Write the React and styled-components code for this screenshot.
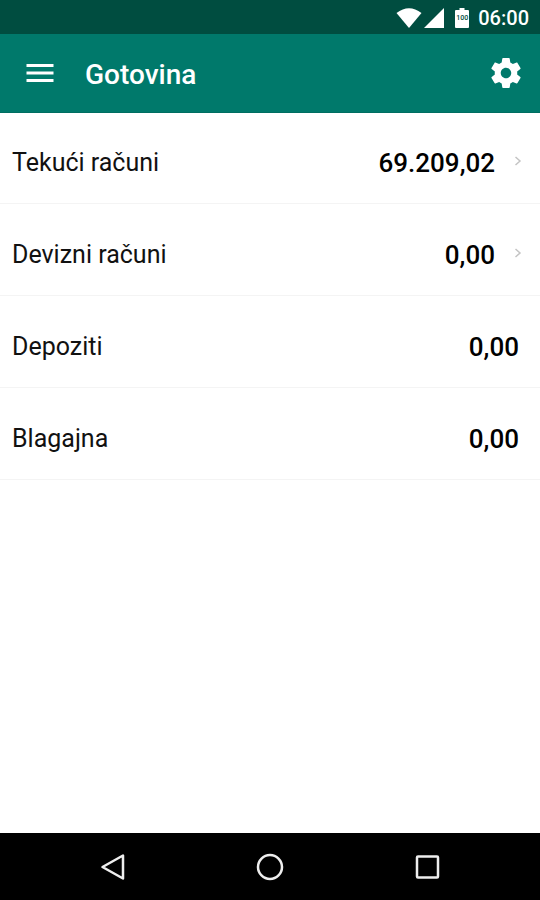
import React from "react";
import styled, { createGlobalStyle } from "styled-components";

const accounts = [
  { name: "Tekući računi", amount: "69.209,02", hasDetails: true },
  { name: "Devizni računi", amount: "0,00", hasDetails: true },
  { name: "Depoziti", amount: "0,00", hasDetails: false },
  { name: "Blagajna", amount: "0,00", hasDetails: false },
];

const AccountRow = ({ account }) => (
  <Row>
    <RowContent
      as={account.hasDetails ? "a" : "div"}
      href={account.hasDetails ? "#" : undefined}
    >
      <AccountName>{account.name}</AccountName>
      <Amount>{account.amount}</Amount>
      {account.hasDetails && (
        <Chevron viewBox="0 0 8 12" aria-hidden="true">
          <path d="M1.5 2L6 6L1.5 10" />
        </Chevron>
      )}
    </RowContent>
  </Row>
);

const App = () => {
  return (
    <Screen>
      <GlobalStyle />
      <StatusBar>
        <svg width="26" height="20" viewBox="0 0 26 20" aria-hidden="true">
          <path d="M0.5 5Q13-4.5 25.5 5L13 20Z" fill="#fff" />
        </svg>
        <svg width="20" height="20" viewBox="0 0 20 20" aria-hidden="true">
          <path d="M20 0V20H0Z" fill="#fff" />
        </svg>
        <Battery>
          <svg width="14" height="20" viewBox="0 0 14 20" aria-hidden="true">
            <path
              d="M4.5 0h5v2H13q1 0 1 1v16q0 1-1 1H1q-1 0-1-1V3q0-1 1-1h3.5z"
              fill="#fff"
            />
          </svg>
          <BatteryLevel>100</BatteryLevel>
        </Battery>
        <Clock>06:00</Clock>
      </StatusBar>

      <AppBar>
        <IconButton type="button" aria-label="Meni">
          <svg viewBox="0 0 24 24">
            <path d="M3 18h18v-2H3v2zm0-5h18v-2H3v2zm0-7v2h18V6H3z" />
          </svg>
        </IconButton>
        <Title>Gotovina</Title>
        <IconButton type="button" aria-label="Postavke">
          <svg viewBox="0 0 24 24">
            <path d="M19.43 12.98c.04-.32.07-.64.07-.98s-.03-.66-.07-.98l2.11-1.65c.19-.15.24-.42.12-.64l-2-3.46c-.12-.22-.39-.3-.61-.22l-2.49 1c-.52-.4-1.08-.73-1.69-.98l-.38-2.65C14.46 2.18 14.25 2 14 2h-4c-.25 0-.46.18-.49.42l-.38 2.65c-.61.25-1.17.59-1.69.98l-2.49-1c-.23-.09-.49 0-.61.22l-2 3.46c-.13.22-.07.49.12.64l2.11 1.65c-.04.32-.07.65-.07.98s.03.66.07.98l-2.11 1.65c-.19.15-.24.42-.12.64l2 3.46c.12.22.39.3.61.22l2.49-1c.52.4 1.08.73 1.69.98l.38 2.65c.03.24.24.42.49.42h4c.25 0 .46-.18.49-.42l.38-2.65c.61-.25 1.17-.59 1.69-.98l2.49 1c.23.09.49 0 .61-.22l2-3.46c.12-.22.07-.49-.12-.64l-2.11-1.65zM12 15.5c-1.93 0-3.5-1.57-3.5-3.5s1.57-3.5 3.5-3.5 3.5 1.57 3.5 3.5-1.57 3.5-3.5 3.5z" />
          </svg>
        </IconButton>
      </AppBar>

      <Content>
        <AccountList>
          {accounts.map((account) => (
            <AccountRow key={account.name} account={account} />
          ))}
        </AccountList>
      </Content>

      <NavigationBar>
        <NavButton type="button" aria-label="Natrag">
          <svg viewBox="0 0 28 28">
            <path d="M25 2.5V25.5L4.5 14Z" />
          </svg>
        </NavButton>
        <NavButton type="button" aria-label="Početna">
          <svg viewBox="0 0 28 28">
            <circle cx="14" cy="14" r="12" />
          </svg>
        </NavButton>
        <NavButton type="button" aria-label="Nedavno">
          <svg viewBox="0 0 28 28">
            <rect x="3" y="3.5" width="21" height="21" rx="1" />
          </svg>
        </NavButton>
      </NavigationBar>
    </Screen>
  );
};

const GlobalStyle = createGlobalStyle`
  * {
    box-sizing: border-box;
  }
  body {
    margin: 0;
    background: #fff;
    font-family: Roboto, "Noto Sans", sans-serif;
  }
`;

const Screen = styled.div`
  display: flex;
  flex-direction: column;
  min-height: 100vh;
`;

const StatusBar = styled.div`
  display: flex;
  align-items: center;
  justify-content: flex-end;
  padding: 6px 11px 4px 0;
  background: #004d40;

  > svg + svg {
    margin-left: 2px;
  }
`;

const Battery = styled.span`
  position: relative;
  display: flex;
  margin: 0 9px 0 11px;
`;

const BatteryLevel = styled.span`
  position: absolute;
  inset: 0;
  color: #004d40;
  font-size: 7px;
  font-weight: 500;
  line-height: 20px;
  text-align: center;
`;

const Clock = styled.span`
  color: #fff;
  font-size: 20px;
  font-weight: 500;
  line-height: 24px;
`;

const AppBar = styled.header`
  display: flex;
  align-items: center;
  height: 78px;
  padding: 0 16px 0 22px;
  background: #00796b;
  box-shadow: 0 1px 0 #006e61;
`;

const IconButton = styled.button`
  display: flex;
  padding: 0;
  border: 0;
  background: none;
  cursor: pointer;

  svg {
    width: 36px;
    height: 36px;
    fill: #fff;
  }
`;

const Title = styled.h1`
  flex: 1;
  margin: 0;
  padding: 4px 0 0 27px;
  color: #fff;
  font-size: 28px;
  font-weight: 500;
  line-height: 32px;
`;

const Content = styled.main`
  flex: 1;
`;

const AccountList = styled.ul`
  margin: 0;
  padding: 0;
  list-style: none;
`;

const Row = styled.li`
  border-bottom: 1px solid #f4f4f4;
`;

const RowContent = styled.div`
  display: flex;
  align-items: center;
  padding: 35px 21px 24px 12px;
  color: #111;
  line-height: 32px;
  text-decoration: none;
`;

const AccountName = styled.span`
  flex: 1;
  font-size: 25px;
`;

const Amount = styled.span`
  color: #000;
  font-size: 26px;
  font-weight: 500;
`;

const Chevron = styled.svg`
  width: 8px;
  height: 12px;
  margin: 0 -3px 4px 19px;
  fill: none;
  stroke: #c4c4c4;
  stroke-width: 1.5;
`;

const NavigationBar = styled.nav`
  display: flex;
  align-items: center;
  justify-content: center;
  gap: 24%;
  height: 67px;
  background: #000;
`;

const NavButton = styled.button`
  display: flex;
  padding: 0;
  border: 0;
  background: none;
  cursor: pointer;

  svg {
    width: 28px;
    height: 28px;
    fill: none;
    stroke: #eee;
    stroke-width: 2.5;
    stroke-linejoin: round;
  }
`;

export default App;
